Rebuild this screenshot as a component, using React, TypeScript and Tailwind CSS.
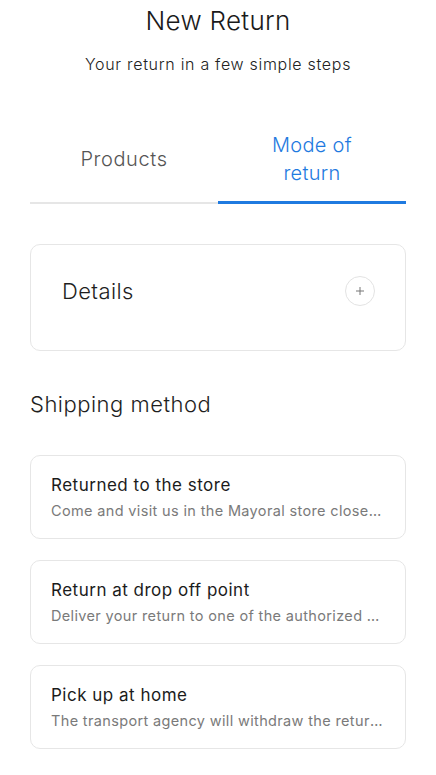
import React from "react";

const font = { fontFamily: "Inter, 'Noto Sans', sans-serif" };

function MethodCard({ title, desc }: { title: string; desc: string }) {
  return (
    <div className="h-[84px] rounded-[10px] border border-[#e6e6e6] bg-white px-[20px] flex flex-col justify-center">
      <div className="text-[17px] leading-[22px] text-[#1b1b1b] font-normal tracking-[0.5px]">{title}</div>
      <div className="mt-[5px] text-[14.5px] leading-[20px] text-[#7a7a7a] truncate tracking-[0.35px]">{desc}</div>
    </div>
  );
}

export default function App() {
  return (
    <div className="w-[436px] min-h-[775px] bg-white" style={font}>
      <div className="flex flex-col items-center pt-[4px]">
        <h1 className="text-[26px] leading-[34px] font-light text-[#1a1a1a] tracking-[0.3px]">New Return</h1>
        <p className="mt-[15px] text-[16px] leading-[22px] text-[#222] font-light tracking-[0.7px]">Your return in a few simple steps</p>
      </div>

      <div className="mx-[30px] mt-[54px] grid grid-cols-2">
        <div className="flex items-center justify-center h-[75px] border-b-2 border-[#e6e6e6] pb-[13px]">
          <span className="text-[20px] leading-[28px] text-[#555] font-light tracking-[0.6px]">Products</span>
        </div>
        <div className="flex items-center justify-center h-[75px] border-b-[3px] border-[#1f7ae0] text-center pb-[12px]">
          <span className="text-[20px] leading-[28px] text-[#1f7ae0] font-light tracking-[0.3px]">Mode of<br />return</span>
        </div>
      </div>

      <div className="mx-[30px] mt-[40px] h-[107px] rounded-[10px] border border-[#e6e6e6] flex items-center justify-between pl-[31px] pr-[30px] pb-[14px]">
        <span className="text-[22px] leading-[28px] text-[#1e1e1e] font-light tracking-[0.4px]">Details</span>
        <div className="w-[30px] h-[30px] rounded-full border border-[#e3e3e3] flex items-center justify-center">
          <svg width="10" height="10" viewBox="0 0 10 10">
            <path d="M5 1v8M1 5h8" stroke="#777" strokeWidth="1" />
          </svg>
        </div>
      </div>

      <h2 className="mx-[30px] mt-[39px] text-[22px] leading-[28px] text-[#1e1e1e] font-light tracking-[0.5px]">Shipping method</h2>

      <div className="mx-[30px] mt-[37px] flex flex-col gap-[21px]">
        <MethodCard title="Returned to the store" desc="Come and visit us in the Mayoral store closest to your home" />
        <MethodCard title="Return at drop off point" desc="Deliver your return to one of the authorized collection points" />
        <MethodCard title="Pick up at home" desc="The transport agency will withdraw the return at your home" />
      </div>
    </div>
  );
}
